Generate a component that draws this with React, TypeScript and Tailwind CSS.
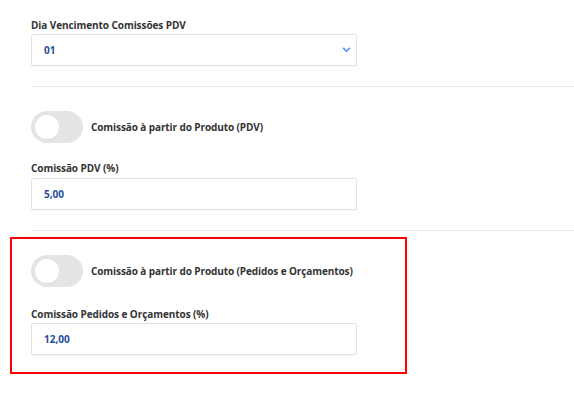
import React from "react";

function Toggle() {
  return (
    <div className="w-[52px] h-[32px] rounded-full bg-[#e4e4e4] flex items-center pl-[4px] shrink-0">
      <div className="w-[24px] h-[24px] rounded-full bg-white" />
    </div>
  );
}

function Label({ children }: { children: React.ReactNode }) {
  return (
    <div className="text-[10px] leading-[14px] font-bold text-[#333333] tracking-[-0.08px]">{children}</div>
  );
}

function Field({ value, chevron }: { value: string; chevron?: boolean }) {
  return (
    <div className="w-[326px] h-[32px] border border-[#e2e2e2] rounded-[2px] shadow-[0_1px_1px_rgba(0,0,0,0.04)] bg-white flex items-center justify-between pl-[12px] pr-[5px]">
      <span className="text-[10px] font-bold text-[#1f4e9b]">{value}</span>
      {chevron && (
        <svg width="9" height="6" viewBox="0 0 9 6">
          <path d="M1.5 1.3 L4.5 4.3 L7.5 1.3" fill="none" stroke="#4a8fe8" strokeWidth="1.6" strokeLinecap="round" strokeLinejoin="round" />
        </svg>
      )}
    </div>
  );
}

export default function App() {
  return (
    <div
      className="w-[574px] h-[405px] bg-white overflow-hidden"
      style={{ fontFamily: '"Open Sans", "Noto Sans", sans-serif' }}
    >
      <div className="pl-[31px] pt-[18px]">
        <Label>Dia Vencimento Comissões PDV</Label>
        <div className="mt-[2px]">
          <Field value="01" chevron />
        </div>
        <div className="mt-[20px] h-px bg-[#e6e9ef]" />
        <div className="mt-[24px] flex items-center gap-[8px]">
          <Toggle />
          <span className="text-[10px] font-bold text-[#333333] tracking-[-0.1px]">Comissão à partir do Produto (PDV)</span>
        </div>
        <div className="mt-[18px]">
          <Label>Comissão PDV (%)</Label>
        </div>
        <div className="mt-[3px]">
          <Field value="5,00" />
        </div>
        <div className="mt-[20px] h-px bg-[#e6e9ef]" />
      </div>
      <div className="ml-[10px] mt-[6px] w-[397px] border-2 border-[#ff0000] pl-[19px] pt-[16px] pb-[17px]">
        <div className="flex items-center gap-[8px]">
          <Toggle />
          <span className="text-[10px] font-bold text-[#333333] tracking-[-0.1px]">Comissão à partir do Produto (Pedidos e Orçamentos)</span>
        </div>
        <div className="mt-[20px]">
          <Label>Comissão Pedidos e Orçamentos (%)</Label>
        </div>
        <div className="mt-[2px]">
          <Field value="12,00" />
        </div>
      </div>
    </div>
  );
}
